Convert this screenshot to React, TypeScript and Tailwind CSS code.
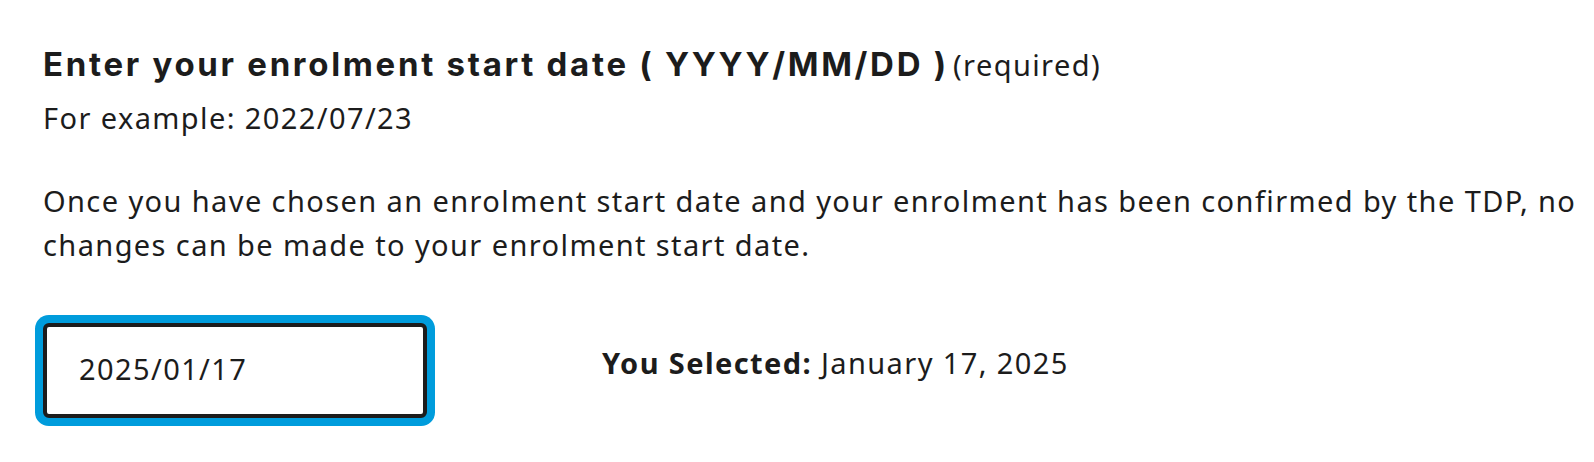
import React from "react";

const body = { fontFamily: '"Noto Sans", "Open Sans", sans-serif' };
const heading = { fontFamily: 'Inter, "Noto Sans", sans-serif' };

export default function App() {
  return (
    <div className="min-h-[462px] bg-white pl-[43px] pt-[42px] text-[#1c1c1c]" style={body}>
      {/* Label */}
      <div className="whitespace-nowrap leading-[44px]">
        <span className="text-[33px] font-bold tracking-[2.7px]" style={heading}>
          Enter your enrolment start date ( YYYY/MM/DD )
        </span>{" "}
        <span className="text-[29px] tracking-[1.4px]">(required)</span>
      </div>
      <p className="mt-[4px] text-[29px] leading-[44px] tracking-[1.4px]">For example: 2022/07/23</p>

      <p className="mt-[39px] max-w-[1545px] text-[29px] leading-[44px] tracking-[1.4px]">
        Once you have chosen an enrolment start date and your enrolment has been confirmed by the TDP, no
        changes can be made to your enrolment start date.
      </p>

      {/* Date input + result */}
      <div className="mt-[56px] flex items-start">
        <input
          type="text"
          defaultValue="2025/01/17"
          className="h-[95px] w-[384px] rounded-[6px] border-[4px] border-[#1c1c1c] bg-white px-[32px] pb-[4px] text-[29px] tracking-[1.4px] text-[#1c1c1c] shadow-[0_0_0_8px_#009cdc] outline-none"
          style={body}
        />
        <p className="ml-[175px] mt-[18px] text-[29px] leading-[44px] tracking-[1.4px]">
          <span className="font-bold">You Selected:</span> January 17, 2025
        </p>
      </div>
    </div>
  );
}
